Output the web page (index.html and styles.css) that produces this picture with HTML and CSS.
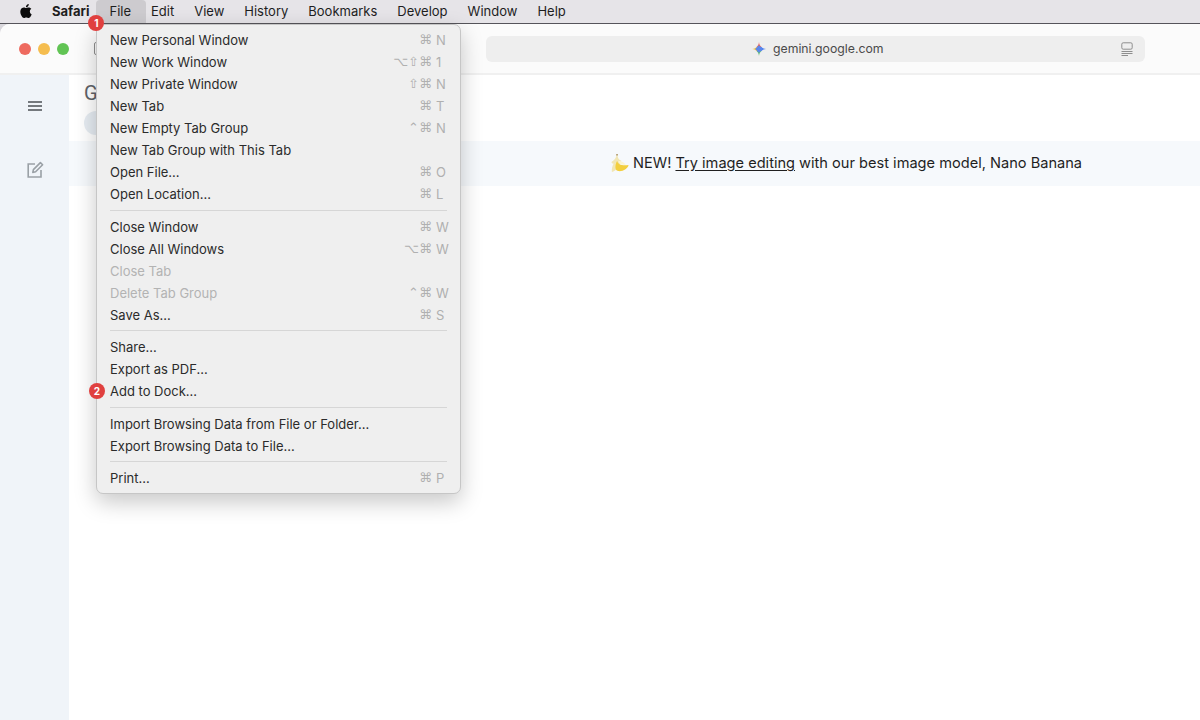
FILE: index.html
```html
<!DOCTYPE html>
<html lang="en">
<head>
<meta charset="utf-8">
<title>Safari File menu</title>
<link rel="stylesheet" href="styles.css">
</head>
<body>
<nav class="menubar">
  <svg class="apple" viewBox="0 0 24 24"><path d="M12.152 6.896c-.948 0-2.415-1.078-3.96-1.04-2.04.027-3.91 1.183-4.961 3.014-2.117 3.675-.546 9.103 1.519 12.09 1.013 1.454 2.208 3.09 3.792 3.039 1.52-.065 2.09-.987 3.935-.987 1.831 0 2.35.987 3.96.948 1.637-.026 2.676-1.48 3.676-2.948 1.156-1.688 1.636-3.325 1.662-3.415-.039-.013-3.182-1.221-3.22-4.857-.026-3.04 2.48-4.494 2.597-4.559-1.429-2.09-3.623-2.324-4.39-2.376-2-.156-3.675 1.09-4.61 1.09zM15.53 3.83c.843-1.012 1.4-2.427 1.245-3.83-1.207.052-2.662.805-3.532 1.818-.78.896-1.454 2.338-1.273 3.714 1.338.104 2.715-.688 3.559-1.701"/></svg>
  <span class="bar-item app">Safari</span>
  <span class="bar-item file">File<span class="badge badge-file">1</span></span>
  <span class="bar-item">Edit</span>
  <span class="bar-item">View</span>
  <span class="bar-item">History</span>
  <span class="bar-item">Bookmarks</span>
  <span class="bar-item">Develop</span>
  <span class="bar-item">Window</span>
  <span class="bar-item">Help</span>
</nav>

<div class="window">
  <header class="toolbar">
    <div class="lights">
      <span class="light red"></span>
      <span class="light yellow"></span>
      <span class="light green"></span>
    </div>
    <span class="sidebar-toggle"></span>
    <div class="urlbar">
      <div class="url">
        <svg class="star" viewBox="0 0 24 24">
          <path fill="#e8695f" d="M12 0C12.500 4 14 7 16 8L12 12 8 8C10 7 11.500 4 12 0Z"/>
          <path fill="#f2c443" d="M0 12C4 11.500 7 10 8 8L12 12 8 16C7 14 4 12.500 0 12Z"/>
          <path fill="#62bb78" d="M12 24C11.500 20 10 17 8 16L12 12 16 16C14 17 12.500 20 12 24Z"/>
          <path fill="#4f82ee" d="M24 12C20 12.500 17 14 16 16L12 12 16 8C17 10 20 11.500 24 12Z"/>
          <path fill="#5b86ec" d="M12 5.500 18.500 12 12 18.500 5.500 12Z"/>
        </svg>
        <span>gemini.google.com</span>
      </div>
      <svg class="reader" viewBox="0 0 14 14" fill="none" stroke="#8e8e8e">
        <rect x="1.800" y="0.800" width="10.400" height="6.400" rx="1.400" stroke-width="1"/>
        <path d="M1.500 9.500H12.500M1.500 11.500H12.500M1.500 13.500H8" stroke-width="1"/>
      </svg>
    </div>
  </header>

  <div class="page">
    <aside class="sidebar">
      <svg class="side-icon menu-icon" viewBox="0 0 14 10" fill="none" stroke="#4b4f54" stroke-width="1.500">
        <path d="M0 1H14M0 5H14M0 9H14"/>
      </svg>
      <svg class="side-icon edit-icon" viewBox="0 0 18 18" fill="none" stroke="#9aa0a6" stroke-width="1.600">
        <path d="M9 3H2.200V16H15V9"/>
        <path d="M6.800 11.400L7.400 8.600 14.400 1.600 16.600 3.800 9.600 10.800Z" stroke-linejoin="round"/>
      </svg>
    </aside>
    <main class="content">
      <div class="head">
        <div class="title">G</div>
        <div class="chip"></div>
      </div>
      <div class="banner">
        <svg class="banana" viewBox="0 0 20 20">
          <path fill="#f1e6b4" d="M7 1C6.500 4 4.500 6.500 1.500 8.500 2 10 3 10.500 4 10 2.500 12.500 1.500 15.500 2 19 4 18.500 6 17 7.500 15.500L12 7C9.500 6.500 8 4 7.800 1Z"/>
          <path fill="#8c6a2a" d="M6.800 0 8 0 8 1.600 6.800 1.600Z"/>
          <path fill="#f3cf3e" d="M7.500 7C8 11 13 12.500 19.500 11.500 19 15 14 18.500 9 18 5.500 17.500 4.500 13 7.500 7Z"/>
          <path fill="#fbf4d2" d="M8.800 7.500C11 7.300 14.500 8.500 16.500 11 13 11.800 9.500 10.500 8.800 7.500Z"/>
        </svg>
        <span class="banner-text">NEW! <a class="banner-link" href="#">Try image editing</a> with our best image model, Nano Banana</span>
      </div>
    </main>
  </div>
</div>

<div class="menu">
  <div class="row"><span>New Personal Window</span><span class="keys"><span>⌘</span><span class="key">N</span></span></div>
  <div class="row"><span>New Work Window</span><span class="keys"><span>⌥⇧⌘</span><span class="key">1</span></span></div>
  <div class="row"><span>New Private Window</span><span class="keys"><span>⇧⌘</span><span class="key">N</span></span></div>
  <div class="row"><span>New Tab</span><span class="keys"><span>⌘</span><span class="key">T</span></span></div>
  <div class="row"><span>New Empty Tab Group</span><span class="keys"><span>⌃⌘</span><span class="key">N</span></span></div>
  <div class="row"><span>New Tab Group with This Tab</span></div>
  <div class="row"><span>Open File...</span><span class="keys"><span>⌘</span><span class="key">O</span></span></div>
  <div class="row"><span>Open Location...</span><span class="keys"><span>⌘</span><span class="key">L</span></span></div>
  <div class="sep"></div>
  <div class="row"><span>Close Window</span><span class="keys"><span>⌘</span><span class="key">W</span></span></div>
  <div class="row"><span>Close All Windows</span><span class="keys"><span>⌥⌘</span><span class="key">W</span></span></div>
  <div class="row off"><span>Close Tab</span></div>
  <div class="row off"><span>Delete Tab Group</span><span class="keys"><span>⌃⌘</span><span class="key">W</span></span></div>
  <div class="row"><span>Save As...</span><span class="keys"><span>⌘</span><span class="key">S</span></span></div>
  <div class="sep"></div>
  <div class="row"><span>Share...</span></div>
  <div class="row"><span>Export as PDF...</span></div>
  <div class="row"><span class="badge badge-dock">2</span><span>Add to Dock...</span></div>
  <div class="sep"></div>
  <div class="row"><span>Import Browsing Data from File or Folder...</span></div>
  <div class="row"><span>Export Browsing Data to File...</span></div>
  <div class="sep"></div>
  <div class="row"><span>Print...</span><span class="keys"><span>⌘</span><span class="key">P</span></span></div>
</div>
</body>
</html>
```
FILE: styles.css
```css
* { box-sizing: border-box; }
html, body { height: 100%; }
body {
  margin: 0;
  height: 720px;
  overflow: hidden;
  display: flex;
  flex-direction: column;
  position: relative;
  background: #d9d7dc;
  font-family: Inter, "Liberation Sans", sans-serif;
  color: #2b2b2b;
}

/* Menu bar */
.menubar {
  height: 24px;
  flex: none;
  display: flex;
  align-items: stretch;
  padding-left: 19px;
  background: #e6e4e8;
  border-bottom: 1px solid #55545a;
  font-size: 13px;
  line-height: 22px;
  color: #1e1e1e;
}
.apple { width: 14px; height: 16px; margin-top: 3px; margin-right: 9px; fill: #0c0c0c; }
.bar-item { padding: 0 10px; position: relative; white-space: nowrap; }
.app { font-weight: 700; }
.file {
  background: #cdcbcf;
  border-radius: 4px 4px 0 0;
  padding: 0 15px 0 13px;
  margin: 0 -5px 0 -3px;
}

/* Badges */
.badge {
  position: absolute;
  width: 16px;
  height: 16px;
  border-radius: 50%;
  background: #e0403f;
  color: #fff;
  font-size: 10px;
  font-weight: 700;
  line-height: 16px;
  text-align: center;
  z-index: 3;
}
.badge-file { left: -8px; top: 15px; }
.badge-dock { left: -21px; top: 3px; }

/* Window */
.window {
  flex: 1;
  display: flex;
  flex-direction: column;
  min-height: 0;
  background: #fff;
  border-radius: 10px 0 0 0;
  overflow: hidden;
}
.toolbar {
  height: 51px;
  flex: none;
  display: flex;
  align-items: center;
  background: #fbfbfb;
  border-bottom: 2px solid #f0f0f0;
  padding-left: 19px;
}
.lights { display: flex; gap: 7px; }
.light { width: 12px; height: 12px; border-radius: 50%; }
.red { background: #ee6a5f; }
.yellow { background: #f5bd4f; }
.green { background: #61c454; }
.sidebar-toggle {
  width: 8px;
  height: 13px;
  margin-left: 25px;
  border: 1px solid #8e8e8e;
  border-radius: 2px;
}
.urlbar {
  width: 659px;
  height: 26px;
  margin-left: 384px;
  display: flex;
  align-items: center;
  background: #eeeeee;
  border-radius: 6px;
  padding-left: 266px;
  padding-right: 11px;
}
.url {
  flex: 1;
  display: flex;
  align-items: center;
  gap: 7px;
  font-size: 12.25px;
  color: #4a4a4a;
}
.star { width: 14px; height: 14px; flex: none; }
.reader { width: 14px; height: 14px; flex: none; }

/* Page */
.page { flex: 1; display: flex; min-height: 0; }
.sidebar {
  width: 69px;
  flex: none;
  background: #f0f4f9;
  display: flex;
  flex-direction: column;
  align-items: center;
  padding-top: 26px;
}
.side-icon { display: block; }
.menu-icon { width: 14px; height: 10px; }
.edit-icon { width: 18px; height: 18px; margin-top: 50px; }

.content { flex: 1; min-width: 0; }
.head { height: 66px; padding: 5px 0 0 15px; }
.title { font-family: Roboto, sans-serif; font-size: 20px; line-height: 26px; color: #5f6368; }
.chip { width: 60px; height: 24px; margin-top: 5px; border-radius: 12px; background: #e6ecf2; }
.banner {
  height: 45px;
  display: flex;
  align-items: center;
  gap: 4px;
  padding-left: 541px;
  padding-bottom: 1px;
  background: #f6f9fc;
  font-size: 14.6px;
  color: #1f1f1f;
}
.banana { width: 19px; height: 19px; flex: none; }
.banner-text { white-space: nowrap; }
.banner-link { color: inherit; text-decoration: underline; text-underline-offset: 2px; }

/* File menu */
.menu {
  position: absolute;
  left: 96px;
  top: 24px;
  width: 365px;
  height: 470px;
  padding: 4px 13px 0;
  background: #efefef;
  border: 1px solid #c6c6c6;
  border-radius: 7px;
  box-shadow: 0 8px 22px rgba(0, 0, 0, 0.22);
  font-size: 13px;
  z-index: 2;
}
.row {
  height: 22px;
  display: flex;
  align-items: center;
  justify-content: space-between;
  position: relative;
  white-space: nowrap;
}
.off { color: #b3b3b3; }
.keys {
  display: flex;
  color: #b0b0b0;
  font-family: "DejaVu Sans", sans-serif;
  font-size: 13px;
}
.key { width: 11px; flex: none; margin-left: 4px; font-family: Inter, sans-serif; font-size: 13px; }
.sep {
  height: 1px;
  margin: 4.75px 0;
  background: #d6d6d6;
}
```
